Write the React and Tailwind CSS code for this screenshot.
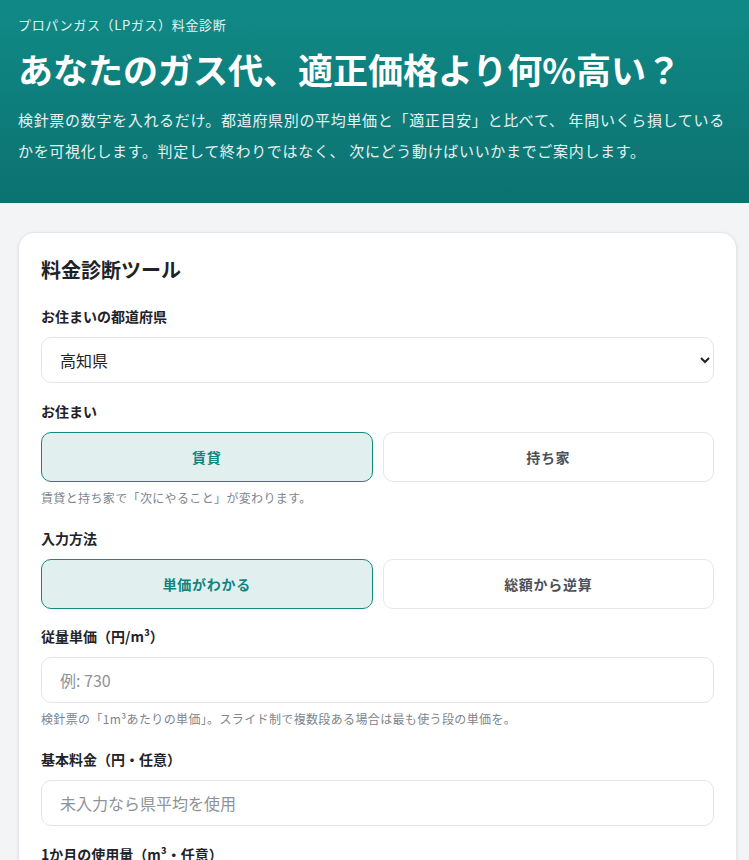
import React, { useState } from 'react';

const font = { fontFamily: '"Noto Sans CJK JP", "Noto Sans", sans-serif' };

const Toggle = ({ options, value, onChange }) => (
  <div className="grid grid-cols-2 gap-[10px]">
    {options.map((o) => (
      <button
        key={o}
        onClick={() => onChange(o)}
        className={`h-[50px] rounded-[10px] border text-[14px] font-bold tracking-[0.05em] ${
          value === o
            ? 'bg-[#e1f0ef] border-[#12897f] text-[#0f857f]'
            : 'bg-white border-[#e3e6ea] text-[#4b5058]'
        }`}
      >
        {o}
      </button>
    ))}
  </div>
);

const Label = ({ children }) => (
  <p className="text-[14px] font-bold text-[#1f2328] leading-[21px] mb-[10px]">{children}</p>
);

const Hint = ({ children }) => (
  <p className="mt-[7px] text-[12px] leading-[18px] tracking-[0.03em] text-[#80858c]">{children}</p>
);

const inputCls =
  'block w-full h-[46px] rounded-[10px] border border-[#e3e6ea] px-[18px] text-[16px] placeholder:text-[#8e9399] outline-none';

export default function App() {
  const [home, setHome] = useState('賃貸');
  const [mode, setMode] = useState('単価がわかる');

  return (
    <div style={font} className="min-h-screen bg-[#f3f4f6]">
      {/* Hero */}
      <div className="h-[203px] bg-gradient-to-b from-[#108a87] to-[#0c7270] px-[18px] pt-[15px] text-white">
        <p className="text-[13px] tracking-[0.05em] leading-[20px] text-white/90">プロパンガス（LPガス）料金診断</p>
        <h1 className="mt-[11px] text-[35px] font-bold leading-[46px]">あなたのガス代、適正価格より何%高い？</h1>
        <p className="mt-[12px] text-[15px] tracking-[0.045em] leading-[31px] text-white/90">
          検針票の数字を入れるだけ。都道府県別の平均単価と「適正目安」と比べて、 年間いくら損しているかを可視化します。判定して終わりではなく、 次にどう動けばいいかまでご案内します。
        </p>
      </div>

      {/* Tool card */}
      <div className="ml-[18px] mr-[12px] mt-[29px] bg-white rounded-2xl border border-[#e5e7eb] shadow-sm pt-[23px] px-[22px] pb-10">
        <h2 className="text-[20px] font-bold text-[#1f2328] leading-[28px] mb-[22px]">料金診断ツール</h2>

        <div className="mb-[18px]">
          <Label>お住まいの都道府県</Label>
          <select
            defaultValue="高知県"
            className="block w-full h-[46px] rounded-[10px] border border-[#e3e6ea] bg-white pl-[14px] pr-2 text-[16px] text-[#1f2328]"
          >
            <option>北海道</option>
            <option>東京都</option>
            <option>大阪府</option>
            <option>高知県</option>
            <option>沖縄県</option>
          </select>
        </div>

        <div className="mb-[21px]">
          <Label>お住まい</Label>
          <Toggle options={['賃貸', '持ち家']} value={home} onChange={setHome} />
          <Hint>賃貸と持ち家で「次にやること」が変わります。</Hint>
        </div>

        <div className="mb-[17px]">
          <Label>入力方法</Label>
          <Toggle options={['単価がわかる', '総額から逆算']} value={mode} onChange={setMode} />
        </div>

        <div className="mb-[21px]">
          <Label>従量単価（円/m³）</Label>
          <input placeholder="例: 730" className={inputCls} />
          <Hint>検針票の「1m³あたりの単価」。スライド制で複数段ある場合は最も使う段の単価を。</Hint>
        </div>

        <div className="mb-[18px]">
          <Label>基本料金（円・任意）</Label>
          <input placeholder="未入力なら県平均を使用" className={inputCls} />
        </div>

        <div>
          <Label>1か月の使用量（m³・任意）</Label>
          <input placeholder="例: 10" className={inputCls} />
        </div>
      </div>
    </div>
  );
}
